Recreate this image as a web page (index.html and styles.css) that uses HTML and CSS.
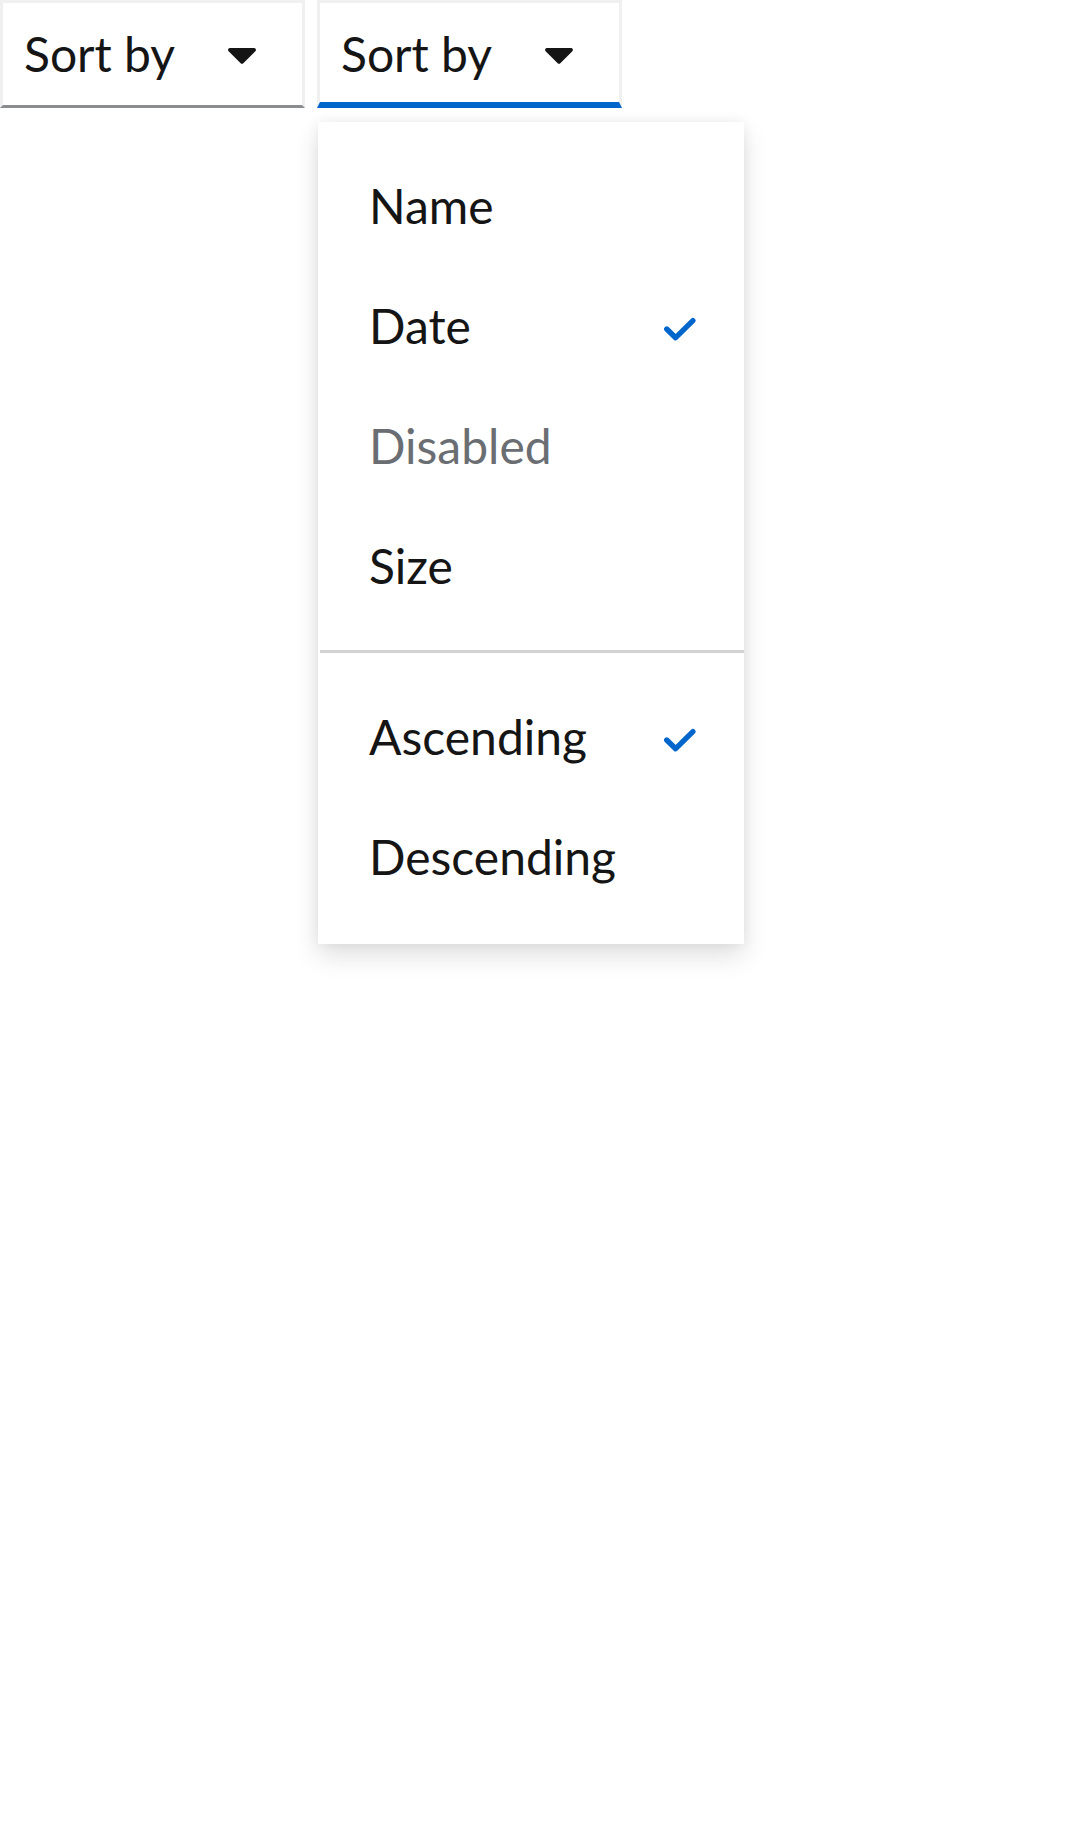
FILE: index.html
```html
<!DOCTYPE html>
<html lang="en">
<head>
<meta charset="utf-8">
<title>Sort by</title>
<link rel="stylesheet" href="styles.css">
</head>
<body>
<div class="bar">
  <div class="select">
    <button class="toggle" type="button">
      <span class="toggle-text">Sort by</span>
      <svg class="caret" viewBox="0 0 320 512" aria-hidden="true"><path d="M31.3 192h257.3c17.8 0 26.7 21.5 14.1 34.1L174.1 354.8c-7.8 7.8-20.5 7.8-28.3 0L17.2 226.1C4.6 213.5 13.5 192 31.3 192z"/></svg>
    </button>
  </div>
  <div class="select">
    <button class="toggle expanded" type="button">
      <span class="toggle-text">Sort by</span>
      <svg class="caret" viewBox="0 0 320 512" aria-hidden="true"><path d="M31.3 192h257.3c17.8 0 26.7 21.5 14.1 34.1L174.1 354.8c-7.8 7.8-20.5 7.8-28.3 0L17.2 226.1C4.6 213.5 13.5 192 31.3 192z"/></svg>
    </button>
    <div class="menu">
      <div class="group">
        <div class="item"><span>Name</span></div>
        <div class="item"><span>Date</span><svg class="check" viewBox="0 0 33 26" aria-hidden="true"><polyline points="2.8,13 12,22 29.8,4.3"/></svg></div>
        <div class="item disabled"><span>Disabled</span></div>
        <div class="item"><span>Size</span></div>
      </div>
      <div class="divider"></div>
      <div class="group">
        <div class="item"><span>Ascending</span><svg class="check" viewBox="0 0 33 26" aria-hidden="true"><polyline points="2.8,13 12,22 29.8,4.3"/></svg></div>
        <div class="item"><span>Descending</span></div>
      </div>
    </div>
  </div>
</div>
</body>
</html>
```
FILE: styles.css
```css
html, body {
  margin: 0;
  padding: 0;
  background: #ffffff;
}

body {
  min-height: 100vh;
  font-family: Lato, "Noto Sans", sans-serif;
  color: #151515;
}

.bar {
  display: flex;
  align-items: flex-start;
  gap: 12px;
}

.select {
  display: flex;
  flex-direction: column;
  align-items: flex-start;
  gap: 14px;
}

.toggle {
  display: flex;
  align-items: center;
  box-sizing: border-box;
  width: 305px;
  height: 108px;
  margin: 0;
  padding: 0 0 0 21px;
  background: #ffffff;
  border: 3px solid #f0f0f0;
  border-bottom: 3px solid #8a8d90;
  font-family: inherit;
  font-size: 48px;
  line-height: 72px;
  color: #151515;
  text-align: left;
}

.toggle.expanded {
  border-bottom: 6px solid #0066cc;
  padding-top: 3px;
}

.toggle-text {
  flex: 1;
  white-space: nowrap;
}

.caret {
  width: 30px;
  height: 48px;
  margin: 0 45px 0 24px;
  fill: #151515;
  flex: none;
}

.menu {
  display: flex;
  flex-direction: column;
  width: 426px;
  margin-left: 1px;
  box-sizing: border-box;
  padding: 24px 0 27px;
  background: #ffffff;
  box-shadow: 0 12px 24px 0 rgba(3, 3, 3, 0.12), 0 0 12px 0 rgba(3, 3, 3, 0.06);
}

.group {
  display: flex;
  flex-direction: column;
}

.item {
  display: flex;
  align-items: center;
  justify-content: space-between;
  height: 120px;
  box-sizing: border-box;
  padding: 0 48px 0 51px;
  font-size: 48px;
  line-height: 72px;
  color: #151515;
  white-space: nowrap;
}

.item.disabled {
  color: #6a6e73;
}

.check {
  width: 32px;
  height: 26px;
  margin-top: 5px;
  flex: none;
  fill: none;
  stroke: #0066cc;
  stroke-width: 5.5;
  stroke-linecap: round;
  stroke-linejoin: round;
}

.divider {
  height: 3px;
  margin: 24px 0 24px 2px;
  background: #d2d2d2;
}
```
